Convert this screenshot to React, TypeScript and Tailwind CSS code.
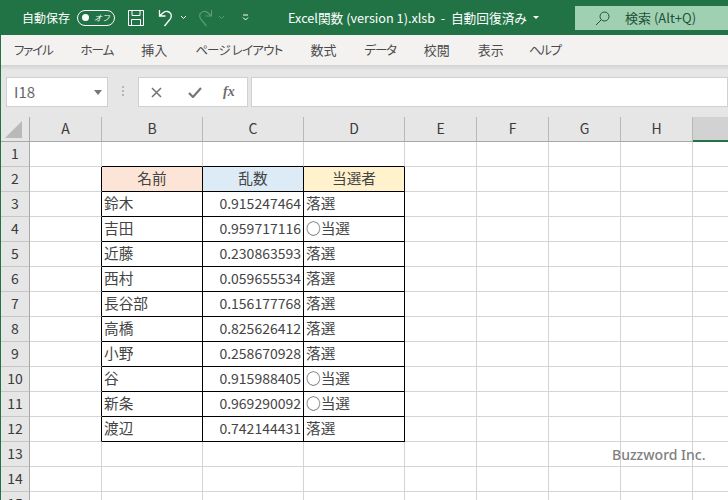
const tabs = [
  { label: "ファイル", cls: "tracking-[-1.2px]" },
  { label: "ホーム", cls: "tracking-[-1px]" },
  { label: "挿入", cls: "text-[13px]" },
  { label: "ページ レイアウト", cls: "tracking-[-0.8px]" },
  { label: "数式", cls: "text-[13px]" },
  { label: "データ", cls: "tracking-[-1.2px]" },
  { label: "校閲", cls: "text-[13px]" },
  { label: "表示", cls: "text-[13px]" },
  { label: "ヘルプ", cls: "tracking-[-1.3px] ml-[-3px]" },
];
const columns = ["A", "B", "C", "D", "E", "F", "G", "H"];

const people = [
  ["鈴木", "0.915247464", "落選"],
  ["吉田", "0.959717116", "○当選"],
  ["近藤", "0.230863593", "落選"],
  ["西村", "0.059655534", "落選"],
  ["長谷部", "0.156177768", "落選"],
  ["高橋", "0.825626412", "落選"],
  ["小野", "0.258670928", "落選"],
  ["谷", "0.915988405", "○当選"],
  ["新条", "0.969290092", "○当選"],
  ["渡辺", "0.742144431", "落選"],
];

const cellBase = "h-[25px] border-r border-b flex items-center overflow-hidden whitespace-nowrap pb-[2px]";

function TitleBar() {
  return (
    <div className="h-[35px] bg-[#217346] text-white flex items-center relative">
      <span className="ml-[22px] text-[12px]">自動保存</span>
      <div className="ml-[7px] w-[38px] h-[16px] rounded-full border border-white flex items-center">
        <span className="ml-[4px] w-[7px] h-[7px] rounded-full bg-white" />
        <span className="ml-[5px] text-[8px] italic">オフ</span>
      </div>
      <svg className="ml-[13px]" width="16" height="18" viewBox="0 0 16 18" fill="none" stroke="#fff" strokeWidth="1">
        <path d="M.5 1.5h15v15H.5zM4 1.5v5h8v-5M3.5 16.5v-6h9v6" />
      </svg>
      <svg className="ml-[14px]" width="17" height="18" viewBox="0 0 17 18" fill="none" stroke="#fff" strokeWidth="1.3">
        <path d="M1.5 1v6h6M1.5 7 5.5 3.500A5 5 0 0 1 13 5c1 3-.5 5-2 6.500L6.500 17" />
      </svg>
      <svg className="ml-[5px]" width="7" height="5" viewBox="0 0 7 5" fill="none" stroke="#fff">
        <path d="m1 1 2.5 2.5L6 1" />
      </svg>
      <svg className="ml-[9px]" width="17" height="18" viewBox="0 0 17 18" fill="none" stroke="#5c9a7a" strokeWidth="1.2">
        <path d="M15.500 1v6h-6M15.500 7 11.500 3.500A5 5 0 0 0 4 5c-1 3 .5 5 2 6.500L10.500 17" />
      </svg>
      <svg className="ml-[5px]" width="7" height="5" viewBox="0 0 7 5" fill="none" stroke="#5c9a7a">
        <path d="m1 1 2.5 2.5L6 1" />
      </svg>
      <svg className="ml-[17px]" width="7" height="7" viewBox="0 0 7 7" fill="none" stroke="#fff">
        <path d="M1 1h5M1 3.500 3.500 6 6 3.500" />
      </svg>
      <span className="ml-[39px] text-[12.7px] whitespace-nowrap">Excel関数 (version 1).xlsb&nbsp; -&nbsp; 自動回復済み</span>
      <svg className="ml-[6px]" width="6" height="3" viewBox="0 0 6 3" fill="#fff">
        <path d="M0 0h6L3 3z" />
      </svg>
      <div className="absolute right-0 top-[6px] w-[153px] h-[24px] bg-[#9fd0b2] text-[#1f5236] flex items-center">
        <svg className="ml-[20px]" width="15" height="15" viewBox="0 0 15 15" fill="none" stroke="#1f5236" strokeWidth="1">
          <circle cx="9.500" cy="5.500" r="4.500" />
          <path d="M6 9 1 14" />
        </svg>
        <span className="ml-[15px] text-[13px]">検索 (Alt+Q)</span>
      </div>
    </div>
  );
}

function Tabs() {
  return (
    <div className="h-[30px] bg-[#f3f2f1] flex items-center gap-[28px] pl-[13px] text-[12.5px] text-[#4a4a4a] whitespace-nowrap [font-feature-settings:'palt']">
      {tabs.map((t) => (
        <span key={t.label} className={t.cls}>{t.label}</span>
      ))}
    </div>
  );
}

function FormulaBar() {
  return (
    <div className="h-[52px] bg-[#e6e6e6] bg-gradient-to-b from-[#d2d2d2] to-[#e6e6e6] to-[5px] pt-[12px] flex items-start">
      <div className="ml-[5px] w-[102px] h-[30px] bg-white border border-[#d0d0d0] flex items-center justify-between pl-[7px] pr-[5px]">
        <span className="text-[15px] text-[#666]">I18</span>
        <svg width="8" height="5" viewBox="0 0 8 5" fill="#777"><path d="M0 0h8L4 5z" /></svg>
      </div>
      <div className="ml-[14px] mt-[9px] w-[2px] h-[10px] border-l-2 border-dotted border-[#b5b5b5]" />
      <div className="ml-[14px] w-[110px] h-[30px] bg-white border border-[#d0d0d0] flex items-center text-[#6e6e6e]">
        <svg className="ml-[12px]" width="11" height="11" viewBox="0 0 11 11" fill="none" stroke="#777" strokeWidth="1.6">
          <path d="m1 1 9 9M10 1l-9 9" />
        </svg>
        <svg className="ml-[26px]" width="14" height="11" viewBox="0 0 14 11" fill="none" stroke="#777" strokeWidth="2.2">
          <path d="m1 6 4 4 8-9" />
        </svg>
        <span className="ml-[21px] text-[14px] leading-none italic font-bold [font-family:'Liberation_Serif',serif]">fx</span>
      </div>
      <div className="ml-[3px] flex-1 h-[30px] bg-white border border-[#d0d0d0]" />
    </div>
  );
}

function Sheet() {
  return (
    <div className="grid grid-cols-[29px_72px_101px_101px_101px_72px_72px_72px_72px_1fr] text-[14.67px] text-[#444]">
      <div className="h-[25px] bg-[#e6e6e6] border-r border-b border-[#a8a8a8] flex items-center justify-center">
        <div className="ml-[-3px] w-0 h-0 border-l-[17px] border-l-transparent border-b-[17px] border-b-[#b9b9b9]" />
      </div>
      {columns.map((c) => (
        <div key={c} className="h-[25px] pb-[1px] text-[14px] bg-[#e6e6e6] border-r border-b border-r-[#b8b8b8] border-b-[#a8a8a8] flex items-center justify-center text-[#3a3a3a]">
          {c}
        </div>
      ))}
      <div className="h-[25px] bg-[#d2d2d2] border-b-2 border-[#217346]" />

      {Array.from({ length: 15 }, (_, i) => i + 1).map((row) => {
        const person = row >= 3 && row <= 12 ? people[row - 3] : null;
        const inTable = row >= 2 && row <= 12;
        return (
          <div key={row} className="contents">
            <div className="h-[25px] pb-[2px] text-[14px] bg-[#e6e6e6] border-r border-b border-r-[#a8a8a8] border-b-[#c6c6c6] flex items-center justify-center text-[#3a3a3a]">
              {row}
            </div>
            <div className={`${cellBase} border-b-[#d4d4d4] ${inTable ? "border-r-black" : "border-r-[#d4d4d4]"}`} />
            {row === 2 ? (
              <>
                <div className={`${cellBase} border-black bg-[#fce4d6] justify-center`}>名前</div>
                <div className={`${cellBase} border-black bg-[#ddebf7] justify-center`}>乱数</div>
                <div className={`${cellBase} border-black bg-[#fff2cc] justify-center`}>当選者</div>
              </>
            ) : person ? (
              <>
                <div className={`${cellBase} border-black pl-[2px]`}>{person[0]}</div>
                <div className={`${cellBase} border-black justify-end pr-[2px] text-[14px]`}>{person[1]}</div>
                <div className={`${cellBase} border-black pl-[2px]`}>{person[2]}</div>
              </>
            ) : (
              [0, 1, 2].map((k) => (
                <div key={k} className={`${cellBase} ${row === 1 ? "border-b-black border-r-[#d4d4d4]" : "border-[#d4d4d4]"}`} />
              ))
            )}
            {[0, 1, 2, 3].map((k) => (
              <div key={k} className={`${cellBase} border-[#d4d4d4]`} />
            ))}
            <div className="h-[25px] border-b border-[#d4d4d4]" />
          </div>
        );
      })}
    </div>
  );
}

export default function App() {
  return (
    <div className="w-[728px] h-[500px] overflow-hidden relative bg-white [font-family:'Noto_Sans_CJK_JP','Noto_Sans',sans-serif]">
      <TitleBar />
      <div className="border-l border-[#217346]">
        <Tabs />
        <FormulaBar />
        <Sheet />
      </div>
      <span className="absolute left-[612px] top-[445px] text-[14px] leading-[20px] font-medium text-[#808080] [font-family:'Noto_Sans',sans-serif]">Buzzword Inc.</span>
    </div>
  );
}
